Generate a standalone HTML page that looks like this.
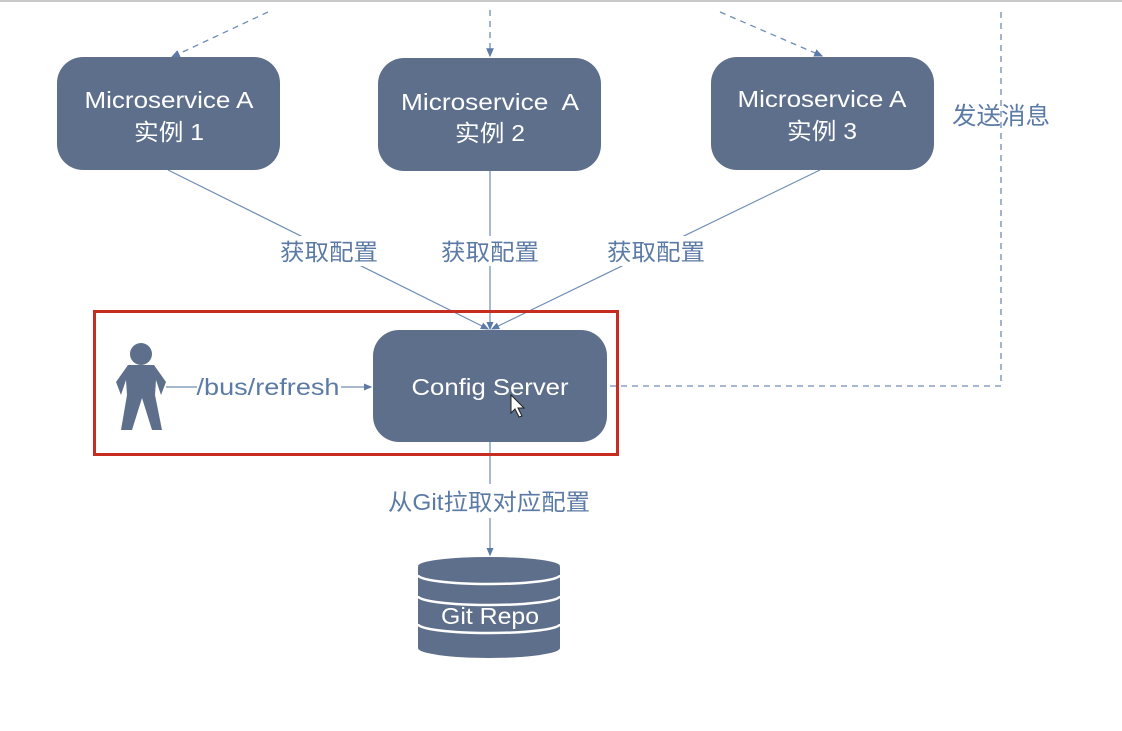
<!DOCTYPE html>
<html><head><style>
body{margin:0;background:#fff;width:1122px;height:726px;overflow:hidden}
text{font-family:"Liberation Sans","Noto Sans CJK SC",sans-serif}
</style></head><body>
<svg width="1122" height="726" viewBox="0 0 1122 726">
<rect x="0" y="0" width="1122" height="2" fill="#c8c8c8"/>
<defs><marker id="ar" markerWidth="8" markerHeight="8" refX="6" refY="4" orient="auto"><path d="M0,1 L7,4 L0,7 z" fill="#5b7aa5"/></marker></defs>
<g stroke="#6f8db5" stroke-width="1.3" fill="none" stroke-dasharray="6,5">
<line x1="268" y1="12" x2="172" y2="57" marker-end="url(#ar)"/>
<line x1="490" y1="10" x2="490" y2="56" marker-end="url(#ar)"/>
<line x1="720" y1="12" x2="822" y2="56" marker-end="url(#ar)"/>
<polyline points="1001,12 1001,386 607,386"/>
</g>
<g stroke="#6f8db5" stroke-width="1.2" fill="none">
<line x1="168" y1="170" x2="488" y2="329" marker-end="url(#ar)"/>
<line x1="490" y1="171" x2="490" y2="329" marker-end="url(#ar)"/>
<line x1="820" y1="170" x2="492" y2="329" marker-end="url(#ar)"/>
<line x1="166" y1="387" x2="197" y2="387"/>
<line x1="341" y1="387" x2="371" y2="387" marker-end="url(#ar)"/>
<line x1="490" y1="442" x2="490" y2="484"/>
<line x1="490" y1="518" x2="490" y2="555" marker-end="url(#ar)"/>
</g>
<g fill="#5e6f8c">
<rect x="57" y="57" width="223" height="113" rx="26"/>
<rect x="378" y="58" width="223" height="113" rx="26"/>
<rect x="711" y="57" width="223" height="113" rx="26"/>
<rect x="373" y="330" width="234" height="112" rx="26"/>
</g>
<g fill="#5b7aa5" font-size="23" text-anchor="middle">
<rect x="276" y="236" width="106" height="30" fill="#fff"/>
<rect x="438" y="236" width="104" height="30" fill="#fff"/>
<rect x="603" y="236" width="106" height="30" fill="#fff"/>
<rect x="384" y="486" width="212" height="30" fill="#fff"/>
<text x="329" y="260" textLength="98" lengthAdjust="spacingAndGlyphs">获取配置</text>
<text x="490" y="260" textLength="98" lengthAdjust="spacingAndGlyphs">获取配置</text>
<text x="656" y="260" textLength="98" lengthAdjust="spacingAndGlyphs">获取配置</text>
<text x="1001" y="124" font-size="24" textLength="98" lengthAdjust="spacingAndGlyphs">发送消息</text>
<text x="489" y="510" font-size="23" textLength="202" lengthAdjust="spacingAndGlyphs">从Git拉取对应配置</text>
<text x="268" y="395" font-size="23" textLength="143" lengthAdjust="spacingAndGlyphs">/bus/refresh</text>
</g>
<g fill="#fff" font-size="23" text-anchor="middle">
<text x="169" y="108" textLength="169" lengthAdjust="spacingAndGlyphs">Microservice A</text><text x="169" y="140" textLength="70" lengthAdjust="spacingAndGlyphs">实例 1</text>
<text x="490" y="110" textLength="178" lengthAdjust="spacingAndGlyphs">Microservice&#160; A</text><text x="490" y="141" textLength="70" lengthAdjust="spacingAndGlyphs">实例 2</text>
<text x="822" y="107" textLength="169" lengthAdjust="spacingAndGlyphs">Microservice A</text><text x="822" y="139" textLength="70" lengthAdjust="spacingAndGlyphs">实例 3</text>
<text x="490" y="395" textLength="157" lengthAdjust="spacingAndGlyphs">Config Server</text>
</g>
<path d="M511,395 L511,413 L515,409 L519,417 L522,416 L518,408 L524,408 Z" fill="#fff" stroke="#222" stroke-width="1"/>
<rect x="94.5" y="311.5" width="523" height="143" fill="none" stroke="#c62d20" stroke-width="3"/>
<g fill="#5e6f8c">
<circle cx="141" cy="354" r="11"/>
<path d="M128,365 L154,365 L166,382 L161,395 L156,380 L155,395 L162,430 L152,430 L142,398 L132,430 L121,430 L127,395 L126,380 L121,395 L116,382 Z"/>
</g>
<g>
<path d="M418,567 L418,648 A71,10 0 0 0 560,648 L560,567 Z" fill="#5e6f8c"/>
<ellipse cx="489" cy="566" rx="71" ry="9" fill="#5e6f8c"/>
<path d="M418,575 A71,9 0 0 0 560,575" fill="none" stroke="#fff" stroke-width="2.5"/>
<path d="M418,596 A71,9 0 0 0 560,596" fill="none" stroke="#fff" stroke-width="2.5"/>
<path d="M418,624 A71,9 0 0 0 560,624" fill="none" stroke="#fff" stroke-width="2.5"/>
<text x="490" y="624" fill="#fff" font-size="23" text-anchor="middle" textLength="98" lengthAdjust="spacingAndGlyphs">Git Repo</text>
</g>
</svg>
</body></html>
